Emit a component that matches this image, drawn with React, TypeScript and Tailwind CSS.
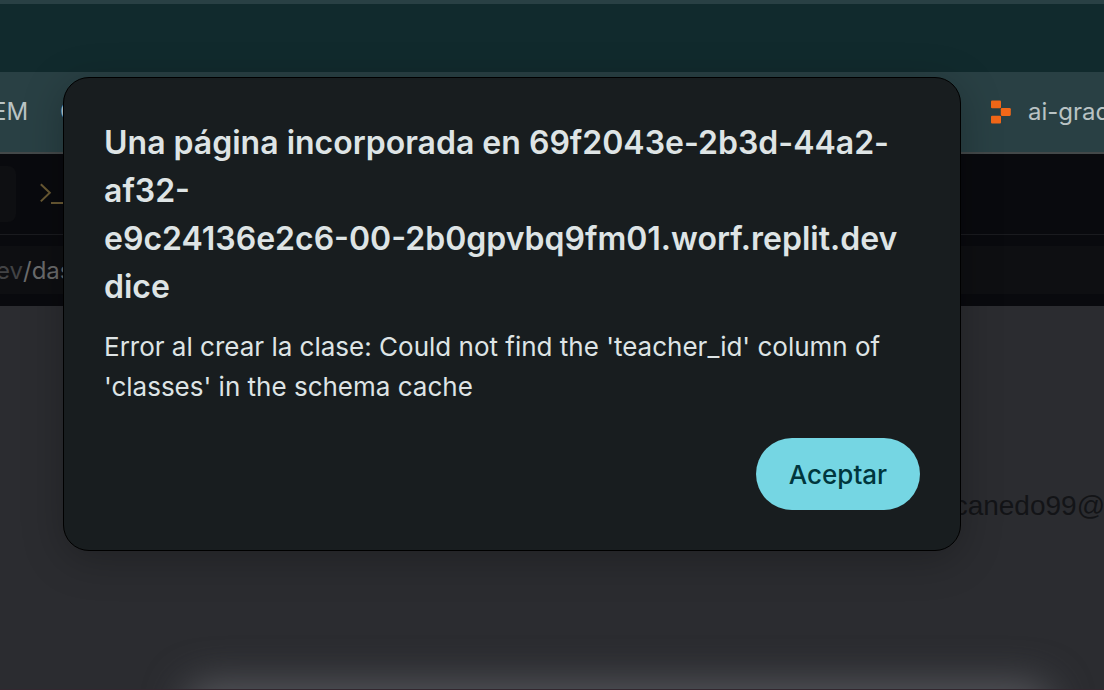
import React from "react";

function ReplitLogo() {
  return (
    <svg viewBox="0 0 20 24" className="h-6 w-5 shrink-0" aria-hidden="true">
      <g fill="#f26718">
        <rect x="0" y="0.4" width="10" height="7.9" rx="1.1" />
        <rect x="9.8" y="8.1" width="10" height="7.8" rx="1.1" />
        <rect x="0" y="15.7" width="10" height="7.9" rx="1.1" />
      </g>
    </svg>
  );
}

function PromptIcon() {
  return (
    <svg
      viewBox="0 0 28 24"
      className="h-6 w-7 shrink-0"
      fill="none"
      stroke="#6a5a34"
      strokeWidth="2"
      aria-hidden="true"
    >
      <path d="M0.8 2.2l9 8.6-9 8.6" />
      <path d="M11 21h15" />
    </svg>
  );
}

function Backdrop() {
  return (
    <div className="flex min-h-screen flex-col overflow-hidden">
      <div className="h-1 bg-[#294044]" />
      <div className="h-17 bg-[#112a2d]" />
      <nav className="flex h-20 items-center justify-between bg-[#294044] text-2xl text-[#b9c3c4]">
        <div className="flex items-center gap-8">
          <a href="#em" className="-ml-2">EM</a>
          <a href="#c">C</a>
        </div>
        <a href="#ai-grader" className="-mr-10 flex w-[153px] items-center gap-[17px] whitespace-nowrap">
          <ReplitLogo />
          ai-grader
        </a>
      </nav>
      <div className="h-0.5 bg-[#434849]" />
      <div className="flex h-20 items-center gap-6 bg-[#090a0e]">
        <div className="h-14 w-4 rounded-r-lg bg-[#0e0f12]" />
        <PromptIcon />
      </div>
      <div className="border-t border-[#1a1b1f] bg-[#090a0e] pt-[11px] pb-3">
        <p className="flex h-12 items-center bg-[#0e0f12] pt-0.5 text-2xl text-[#6a6b6c]">
          <span className="-ml-1 text-[#424345]">ev</span>
          <span>/dashboard</span>
        </p>
      </div>
      <main className="relative flex flex-1 flex-col overflow-hidden bg-[#2b2c30]">
        <p className="-mr-17 mt-45 self-end font-['Liberation_Sans',sans-serif] text-[28px] leading-10 text-[#131417]">
          canedo99@gmail
        </p>
        <div className="absolute right-15 -bottom-10 left-48 h-10 rounded-t-2xl bg-[#5a5b60] shadow-[0_0_40px_6px_#5a5b60]" />
        <div className="absolute inset-x-0 bottom-0 h-px bg-[#33272f]" />
      </main>
    </div>
  );
}

export default function App() {
  return (
    <div className="relative min-h-screen overflow-hidden bg-[#2b2c30] font-[Inter,sans-serif]">
      <Backdrop />
      <div className="absolute inset-x-0 top-0 flex justify-center px-10 pt-[77px]">
        <section
          role="alertdialog"
          aria-labelledby="dialog-title"
          aria-describedby="dialog-message"
          className="mr-20 w-full max-w-[898px] rounded-[26px] border border-black bg-[#181d1f] px-10 pt-[41px] pb-10 text-[#dee4e5] shadow-[0_8px_40px_rgba(0,0,0,0.25)]"
        >
          <h1 id="dialog-title" className="text-[32px] leading-12 font-semibold">
            Una página incorporada en 69f2043e-2b3d-44a2-af32-
            <br />
            e9c24136e2c6-00-2b0gpvbq9fm01.worf.replit.dev dice
          </h1>
          <p id="dialog-message" className="mt-4 text-[26px] leading-10">
            Error al crear la clase: Could not find the 'teacher_id' column of 'classes' in the schema cache
          </p>
          <div className="mt-[31px] flex justify-end">
            <button
              type="button"
              className="h-18 min-w-41 rounded-full bg-[#75d6e3] px-8 text-[26px] font-medium text-[#00363d]"
            >
              Aceptar
            </button>
          </div>
        </section>
      </div>
    </div>
  );
}
